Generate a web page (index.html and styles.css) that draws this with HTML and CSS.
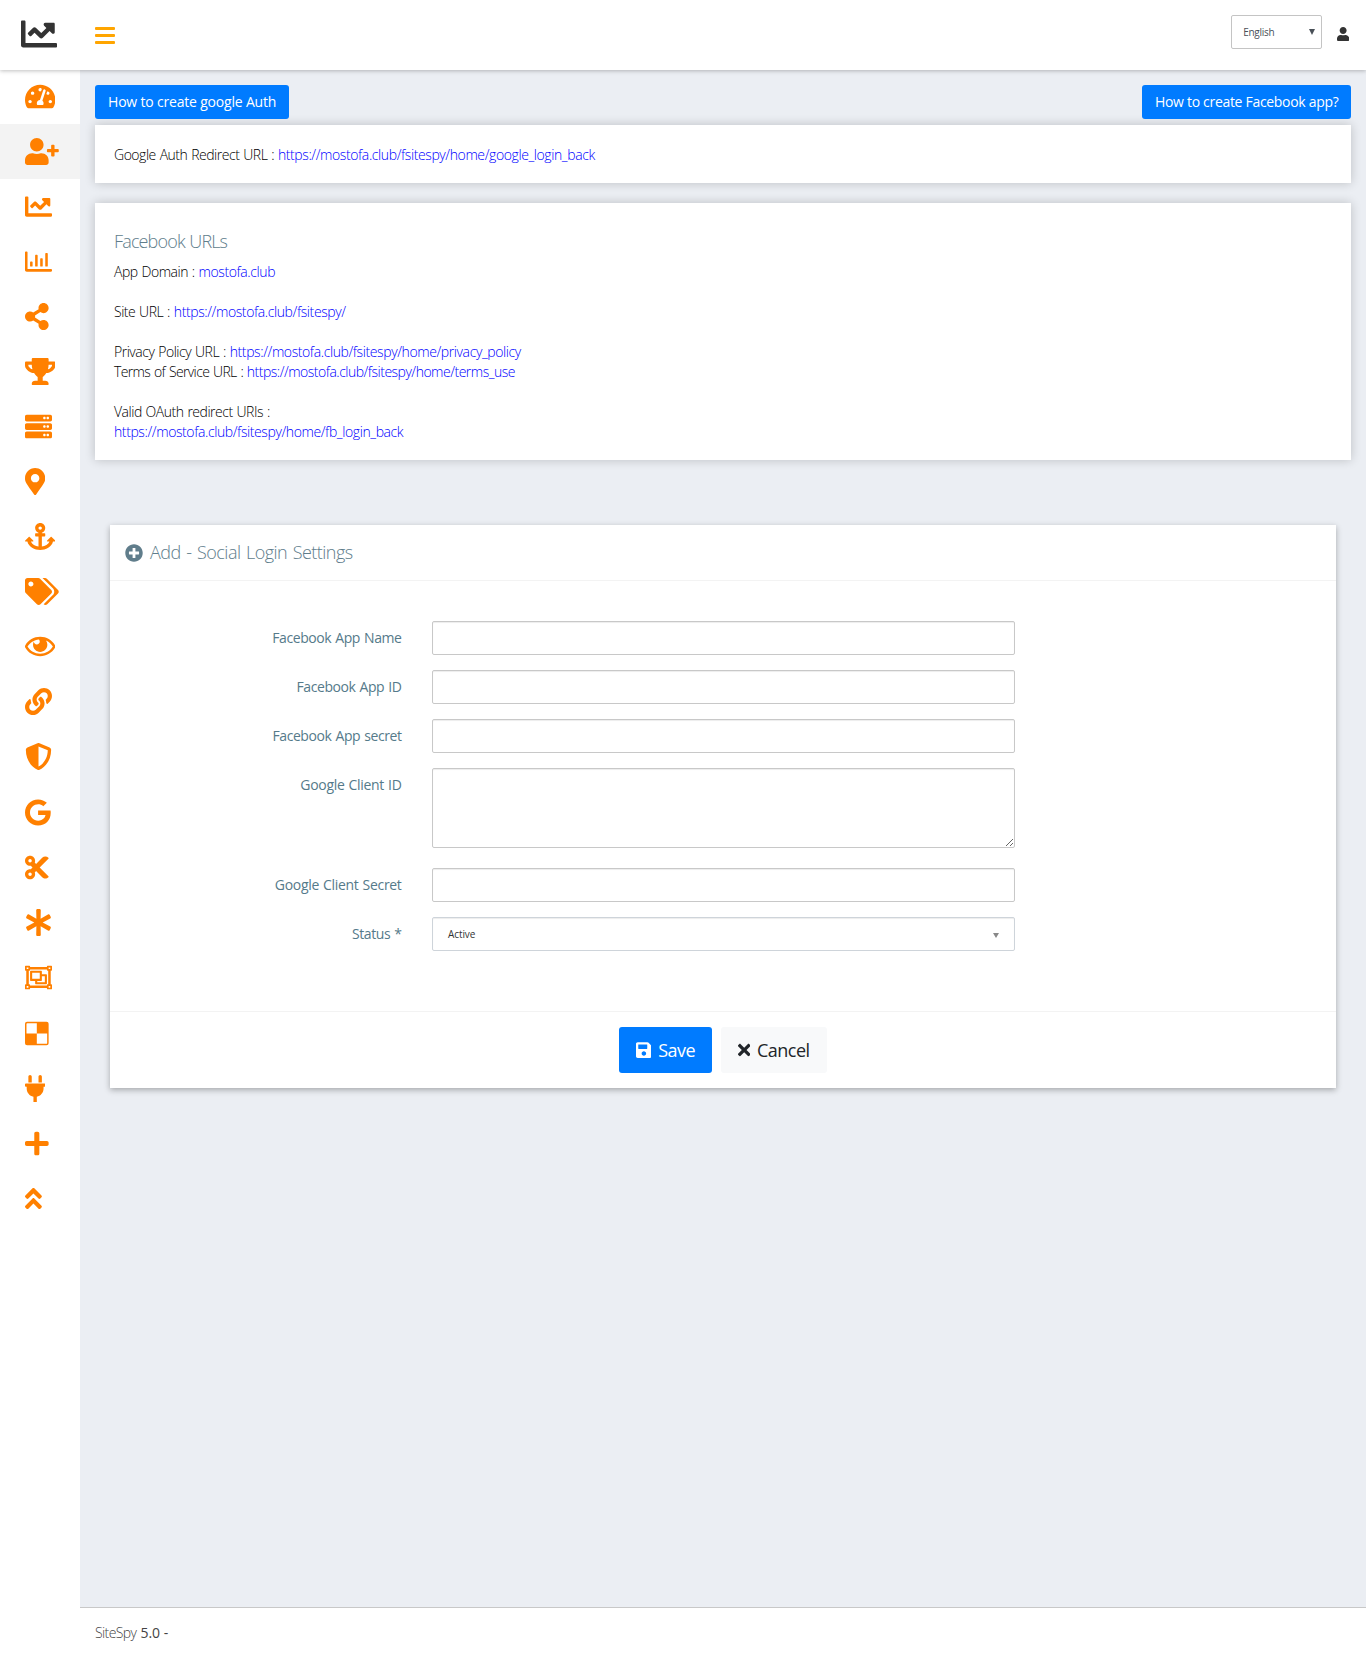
FILE: index.html
```html
<!DOCTYPE html>
<html lang="en">
<head>
<meta charset="utf-8">
<title>SiteSpy - Social Login Settings</title>
<link rel="stylesheet" href="styles.css">
</head>
<body>
<header class="topbar">
  <a class="brand"><svg viewBox="0 0 512 512"><path d="M496 384H64V80c0-8.84-7.16-16-16-16H16C7.16 64 0 71.16 0 80v336c0 17.67 14.33 32 32 32h464c8.84 0 16-7.16 16-16v-32c0-8.84-7.16-16-16-16zM464 96H345.94c-21.38 0-32.09 25.85-16.97 40.97l32.4 32.4L288 242.75l-73.37-73.37c-12.5-12.5-32.76-12.5-45.25 0l-68.69 68.69c-6.25 6.25-6.25 16.38 0 22.63l22.62 22.62c6.25 6.25 16.38 6.25 22.63 0L192 237.25l73.37 73.37c12.5 12.5 32.76 12.5 45.25 0l96-96 32.4 32.4c15.12 15.12 40.97 4.41 40.97-16.97V112c.01-8.84-7.15-16-15.99-16z"/></svg></a>
  <a class="toggle"><i></i><i></i><i></i></a>
  <div class="lang"><span>English</span><b class="caret"></b></div>
  <a class="user"><svg viewBox="0 0 448 512"><path d="M224 256c70.7 0 128-57.3 128-128S294.7 0 224 0 96 57.3 96 128s57.3 128 128 128zm89.6 32h-16.7c-22.2 10.2-46.9 16-72.9 16s-50.6-5.8-72.9-16h-16.7C60.2 288 0 348.2 0 422.4V464c0 26.5 21.5 48 48 48h352c26.5 0 48-21.5 48-48v-41.6c0-74.2-60.2-134.4-134.4-134.4z"/></svg></a>
</header>
<div class="shell">
<nav class="sidebar">
  <a><svg viewBox="0 0 576 512"><path d="M288 32C128.94 32 0 160.94 0 320c0 52.8 14.25 102.26 39.06 144.8 5.61 9.62 16.3 15.2 27.44 15.2h443c11.14 0 21.83-5.58 27.44-15.2C561.75 422.26 576 372.8 576 320c0-159.06-128.94-288-288-288zm0 64c14.71 0 26.58 10.13 30.32 23.65-1.11 2.26-2.64 4.23-3.45 6.67l-9.22 27.67c-5.13 3.49-10.97 6.01-17.64 6.01-17.67 0-32-14.33-32-32S270.33 96 288 96zM96 384c-17.67 0-32-14.33-32-32s14.33-32 32-32 32 14.33 32 32-14.33 32-32 32zm48-160c-17.67 0-32-14.33-32-32s14.33-32 32-32 32 14.33 32 32-14.33 32-32 32zm246.77-72.41l-61.33 184C343.13 347.33 352 364.54 352 384c0 11.72-3.38 22.55-8.88 32H232.88c-5.5-9.45-8.88-20.28-8.88-32 0-33.94 26.5-61.43 59.9-63.59l61.34-184.01c4.17-12.56 17.73-19.45 30.36-15.17 12.57 4.19 19.35 17.79 15.17 30.36zm14.66 57.2l15.52-46.55c3.47-1.29 7.13-2.23 11.05-2.23 17.67 0 32 14.33 32 32s-14.33 32-32 32c-11.38-.01-20.89-6.28-26.57-15.22zM480 384c-17.67 0-32-14.33-32-32s14.33-32 32-32 32 14.33 32 32-14.33 32-32 32z"/></svg></a>
  <a class="active"><svg viewBox="0 0 640 512"><path d="M624 208h-64v-64c0-8.8-7.2-16-16-16h-32c-8.8 0-16 7.2-16 16v64h-64c-8.8 0-16 7.2-16 16v32c0 8.8 7.2 16 16 16h64v64c0 8.8 7.2 16 16 16h32c8.8 0 16-7.2 16-16v-64h64c8.8 0 16-7.2 16-16v-32c0-8.8-7.2-16-16-16zm-400 48c70.7 0 128-57.3 128-128S294.7 0 224 0 96 57.3 96 128s57.3 128 128 128zm89.6 32h-16.7c-22.2 10.2-46.9 16-72.9 16s-50.6-5.8-72.9-16h-16.7C60.2 288 0 348.2 0 422.4V464c0 26.5 21.5 48 48 48h352c26.5 0 48-21.5 48-48v-41.6c0-74.2-60.2-134.4-134.4-134.4z"/></svg></a>
  <a><svg viewBox="0 0 512 512"><path d="M496 384H64V80c0-8.84-7.16-16-16-16H16C7.16 64 0 71.16 0 80v336c0 17.67 14.33 32 32 32h464c8.84 0 16-7.16 16-16v-32c0-8.84-7.16-16-16-16zM464 96H345.94c-21.38 0-32.09 25.85-16.97 40.97l32.4 32.4L288 242.75l-73.37-73.37c-12.5-12.5-32.76-12.5-45.25 0l-68.69 68.69c-6.25 6.25-6.25 16.38 0 22.63l22.62 22.62c6.25 6.25 16.38 6.25 22.63 0L192 237.25l73.37 73.37c12.5 12.5 32.76 12.5 45.25 0l96-96 32.4 32.4c15.12 15.12 40.97 4.41 40.97-16.97V112c.01-8.84-7.15-16-15.99-16z"/></svg></a>
  <a><svg viewBox="0 0 512 512"><path d="M396.8 352h22.4c6.4 0 12.8-6.4 12.8-12.8V108.8c0-6.4-6.4-12.8-12.8-12.8h-22.4c-6.4 0-12.8 6.4-12.8 12.8v230.4c0 6.4 6.4 12.8 12.8 12.8zm-192 0h22.4c6.4 0 12.8-6.4 12.8-12.8V140.8c0-6.4-6.4-12.8-12.8-12.8h-22.4c-6.4 0-12.8 6.4-12.8 12.8v198.4c0 6.4 6.4 12.8 12.8 12.8zm96 0h22.4c6.4 0 12.8-6.4 12.8-12.8V204.8c0-6.4-6.4-12.8-12.8-12.8h-22.4c-6.4 0-12.8 6.4-12.8 12.8v134.4c0 6.4 6.4 12.8 12.8 12.8zM496 400H48V80c0-8.84-7.16-16-16-16H16C7.16 64 0 71.16 0 80v336c0 17.67 14.33 32 32 32h464c8.84 0 16-7.16 16-16v-16c0-8.84-7.16-16-16-16zm-387.2-48h22.4c6.4 0 12.8-6.4 12.8-12.8v-70.4c0-6.4-6.4-12.8-12.8-12.8h-22.4c-6.4 0-12.8 6.4-12.8 12.8v70.4c0 6.4 6.4 12.8 12.8 12.8z"/></svg></a>
  <a><svg viewBox="0 0 448 512"><path d="M352 320c-22.608 0-43.387 7.819-59.79 20.895l-102.486-64.054a96.551 96.551 0 0 0 0-41.683l102.486-64.054C308.613 184.181 329.392 192 352 192c53.019 0 96-42.981 96-96S405.019 0 352 0s-96 42.981-96 96c0 7.158.79 14.13 2.276 20.841L155.79 180.895C139.387 167.819 118.608 160 96 160c-53.019 0-96 42.981-96 96s42.981 96 96 96c22.608 0 43.387-7.819 59.79-20.895l102.486 64.054A96.301 96.301 0 0 0 256 416c0 53.019 42.981 96 96 96s96-42.981 96-96-42.981-96-96-96z"/></svg></a>
  <a><svg viewBox="0 0 576 512"><path d="M552 64H448V24c0-13.3-10.7-24-24-24H152c-13.3 0-24 10.7-24 24v40H24C10.7 64 0 74.7 0 88v56c0 35.7 22.5 72.4 61.9 100.7 31.5 22.7 69.8 37.1 110 41.7C203.3 338.5 240 360 240 360v72h-48c-35.3 0-64 20.7-64 56v12c0 6.6 5.4 12 12 12h296c6.6 0 12-5.4 12-12v-12c0-35.3-28.7-56-64-56h-48v-72s36.7-21.5 68.1-73.6c40.3-4.6 78.6-19 110-41.7 39.3-28.3 61.9-65 61.9-100.7V88c0-13.3-10.7-24-24-24zM99.3 192.8C74.9 175.2 64 155.6 64 144v-16h64.2c1 32.6 5.8 61.2 12.8 86.2-15.1-5.2-29.2-12.4-41.7-21.4zM512 144c0 16.1-17.7 36.1-35.3 48.8-12.5 9-26.7 16.2-41.8 21.4 7-25 11.8-53.6 12.8-86.2H512v16z"/></svg></a>
  <a><svg viewBox="0 0 512 512"><path d="M480 160H32c-17.673 0-32-14.327-32-32V64c0-17.673 14.327-32 32-32h448c17.673 0 32 14.327 32 32v64c0 17.673-14.327 32-32 32zm-48-88c-13.255 0-24 10.745-24 24s10.745 24 24 24 24-10.745 24-24-10.745-24-24-24zm-64 0c-13.255 0-24 10.745-24 24s10.745 24 24 24 24-10.745 24-24-10.745-24-24-24zm112 248H32c-17.673 0-32-14.327-32-32v-64c0-17.673 14.327-32 32-32h448c17.673 0 32 14.327 32 32v64c0 17.673-14.327 32-32 32zm-48-88c-13.255 0-24 10.745-24 24s10.745 24 24 24 24-10.745 24-24-10.745-24-24-24zm-64 0c-13.255 0-24 10.745-24 24s10.745 24 24 24 24-10.745 24-24-10.745-24-24-24zm112 248H32c-17.673 0-32-14.327-32-32v-64c0-17.673 14.327-32 32-32h448c17.673 0 32 14.327 32 32v64c0 17.673-14.327 32-32 32zm-48-88c-13.255 0-24 10.745-24 24s10.745 24 24 24 24-10.745 24-24-10.745-24-24-24zm-64 0c-13.255 0-24 10.745-24 24s10.745 24 24 24 24-10.745 24-24-10.745-24-24-24z"/></svg></a>
  <a><svg viewBox="0 0 384 512"><path d="M172.268 501.67C26.97 291.031 0 269.413 0 192 0 85.961 85.961 0 192 0s192 85.961 192 192c0 77.413-26.97 99.031-172.268 309.67-9.535 13.774-29.93 13.773-39.464 0zM192 272c44.183 0 80-35.817 80-80s-35.817-80-80-80-80 35.817-80 80 35.817 80 80 80z"/></svg></a>
  <a><svg viewBox="0 0 576 512"><path d="M12.971 352h32.394C67.172 454.735 181.944 512 288 512c106.229 0 220.853-57.38 242.635-160h32.394c10.691 0 16.045-12.926 8.485-20.485l-67.029-67.029c-4.686-4.686-12.284-4.686-16.971 0l-67.029 67.029c-7.56 7.56-2.206 20.485 8.485 20.485h35.146c-20.29 54.317-84.963 86.588-144.117 94.015V256h52c6.627 0 12-5.373 12-12v-40c0-6.627-5.373-12-12-12h-52v-5.47c37.281-13.226 63.995-48.804 63.943-90.544C383.874 43.026 341.375.088 288.479.001 235.226-.086 192 43.056 192 96c0 41.794 26.716 77.357 64 90.53V192h-52c-6.627 0-12 5.373-12 12v40c0 6.627 5.373 12 12 12h52v190.015c-58.936-7.399-123.82-39.679-144.117-94.015h35.146c10.691 0 16.045-12.926 8.485-20.485l-67.029-67.029c-4.686-4.686-12.284-4.686-16.971 0L4.485 331.515C-3.074 339.074 2.28 352 12.971 352zM288 64c17.645 0 32 14.355 32 32s-14.355 32-32 32-32-14.355-32-32 14.355-32 32-32z"/></svg></a>
  <a><svg viewBox="0 0 640 512"><path d="M497.941 225.941L286.059 14.059A48 48 0 0 0 252.118 0H48C21.49 0 0 21.49 0 48v204.118a48 48 0 0 0 14.059 33.941l211.882 211.882c18.744 18.745 49.136 18.746 67.882 0l204.118-204.118c18.745-18.745 18.745-49.137 0-67.882zM112 160c-26.51 0-48-21.49-48-48s21.49-48 48-48 48 21.49 48 48-21.49 48-48 48zm513.941 133.823L421.823 497.941c-18.745 18.745-49.137 18.745-67.882 0l-.36-.36L527.64 323.522c16.999-16.999 26.36-39.6 26.36-63.64s-9.362-46.641-26.36-63.64L331.397 0h48.721a48 48 0 0 1 33.941 14.059l211.882 211.882c18.745 18.745 18.745 49.137 0 67.882z"/></svg></a>
  <a><svg viewBox="0 0 576 512"><path d="M569.354 231.631C512.969 135.949 407.81 72 288 72 168.14 72 63.004 135.994 6.646 231.631a47.999 47.999 0 0 0 0 48.739C63.031 376.051 168.19 440 288 440c119.86 0 224.996-63.994 281.354-159.631a47.997 47.997 0 0 0 0-48.738zM288 392c-102.556 0-192.091-54.701-240-136 44.157-74.933 123.677-127.27 216.162-135.007C273.958 131.078 280 144.83 280 160c0 30.928-25.072 56-56 56s-56-25.072-56-56l.001-.042C157.794 179.043 152 200.844 152 224c0 75.111 60.889 136 136 136s136-60.889 136-136c0-31.031-10.4-59.629-27.895-82.515C451.704 164.638 498.009 205.106 528 256c-47.908 81.299-137.444 136-240 136z"/></svg></a>
  <a><svg viewBox="0 0 512 512"><path d="M326.612 185.391c59.747 59.809 58.927 155.698.36 214.59-.11.12-.24.25-.36.37l-67.2 67.2c-59.27 59.27-155.699 59.262-214.96 0-59.27-59.26-59.27-155.7 0-214.96l37.106-37.106c9.84-9.84 26.786-3.3 27.294 10.606.648 17.722 3.826 35.527 9.69 52.721 1.986 5.822.567 12.262-3.783 16.612l-13.087 13.087c-28.026 28.026-28.905 73.66-1.155 101.96 28.024 28.579 74.086 28.749 102.325.51l67.2-67.19c28.191-28.191 28.073-73.757 0-101.83-3.701-3.694-7.429-6.564-10.341-8.569a16.037 16.037 0 0 1-6.947-12.606c-.396-10.567 3.348-21.456 11.698-29.806l21.054-21.055c5.521-5.521 14.182-6.199 20.584-1.731a152.482 152.482 0 0 1 20.522 17.197zM467.547 44.449c-59.261-59.262-155.69-59.27-214.96 0l-67.2 67.2c-.12.12-.25.25-.36.37-58.566 58.892-59.387 154.781.36 214.59a152.454 152.454 0 0 0 20.521 17.196c6.402 4.468 15.064 3.789 20.584-1.731l21.054-21.055c8.35-8.35 12.094-19.239 11.698-29.806a16.037 16.037 0 0 0-6.947-12.606c-2.912-2.005-6.64-4.875-10.341-8.569-28.073-28.073-28.191-73.639 0-101.83l67.2-67.19c28.239-28.239 74.3-28.069 102.325.51 27.75 28.3 26.872 73.934-1.155 101.96l-13.087 13.087c-4.35 4.35-5.769 10.79-3.783 16.612 5.864 17.194 9.042 34.999 9.69 52.721.509 13.906 17.454 20.446 27.294 10.606l37.106-37.106c59.271-59.259 59.271-155.699.001-214.959z"/></svg></a>
  <a><svg viewBox="0 0 512 512"><path d="M496 128c0 221.282-135.934 344.645-221.539 380.308a48 48 0 0 1-36.923 0C130.495 463.713 16 326.487 16 128a48 48 0 0 1 29.539-44.308l192-80a48 48 0 0 1 36.923 0l192 80A48 48 0 0 1 496 128zM256 446.313l.066.034c93.735-46.689 172.497-156.308 175.817-307.729L256 65.333v380.98z"/></svg></a>
  <a class="logo-icon"><svg viewBox="0 0 488 512"><path d="M488 261.8C488 403.3 391.1 504 248 504 110.8 504 0 393.2 0 256S110.8 8 248 8c66.8 0 123 24.5 166.3 64.9l-67.5 64.9C258.5 52.6 94.3 116.6 94.3 256c0 86.5 69.1 156.6 153.7 156.6 98.2 0 135-70.4 140.8-106.9H248v-85.3h236.1c2.3 12.7 3.9 24.9 3.9 41.4z"/></svg></a>
  <a><svg viewBox="0 0 448 512"><path d="M278.06 256L444.48 89.57c4.69-4.69 4.69-12.29 0-16.97-32.8-32.8-85.99-32.8-118.79 0L210.18 188.12l-24.86-24.86c4.31-10.92 6.68-22.81 6.68-35.26 0-53.02-42.98-96-96-96S0 74.98 0 128s42.98 96 96 96c4.54 0 8.99-.32 13.36-.93L142.29 256l-32.93 32.93c-4.37-.61-8.83-.93-13.36-.93-53.02 0-96 42.98-96 96s42.98 96 96 96 96-42.98 96-96c0-12.45-2.37-24.34-6.68-35.26l24.86-24.86L325.69 439.4c32.8 32.8 85.99 32.8 118.79 0 4.69-4.68 4.69-12.28 0-16.97L278.06 256zM96 160c-17.64 0-32-14.36-32-32s14.36-32 32-32 32 14.36 32 32-14.36 32-32 32zm0 256c-17.64 0-32-14.36-32-32s14.36-32 32-32 32 14.36 32 32-14.36 32-32 32z"/></svg></a>
  <a><svg viewBox="0 0 512 512"><path d="M478.21 334.093L336 256l142.21-78.093c11.795-6.477 15.961-21.384 9.232-33.037l-19.48-33.741c-6.728-11.653-21.72-15.499-33.227-8.523L296 186.718l3.475-162.204C299.763 11.061 288.937 0 275.48 0h-38.96c-13.456 0-24.283 11.061-23.994 24.514L216 186.718 77.265 102.607c-11.506-6.976-26.499-3.13-33.227 8.523l-19.48 33.741c-6.728 11.653-2.562 26.56 9.233 33.037L176 256 33.79 334.093c-11.795 6.477-15.961 21.384-9.232 33.037l19.48 33.741c6.728 11.653 21.721 15.499 33.227 8.523L216 325.282l-3.475 162.204C212.237 500.939 223.064 512 236.52 512h38.961c13.456 0 24.283-11.061 23.995-24.514L296 325.282l138.735 84.111c11.506 6.976 26.499 3.13 33.227-8.523l19.48-33.741c6.728-11.653 2.563-26.559-9.232-33.036z"/></svg></a>
  <a><svg viewBox="0 0 512 512"><path d="M500 128c6.627 0 12-5.373 12-12V44c0-6.627-5.373-12-12-12h-72c-6.627 0-12 5.373-12 12v12H96V44c0-6.627-5.373-12-12-12H12C5.373 32 0 37.373 0 44v72c0 6.627 5.373 12 12 12h12v256H12c-6.627 0-12 5.373-12 12v72c0 6.627 5.373 12 12 12h72c6.627 0 12-5.373 12-12v-12h320v12c0 6.627 5.373 12 12 12h72c6.627 0 12-5.373 12-12v-72c0-6.627-5.373-12-12-12h-12V128h12zm-52-64h32v32h-32V64zM32 64h32v32H32V64zm32 384H32v-32h32v32zm416 0h-32v-32h32v32zm-40-64h-12c-6.627 0-12 5.373-12 12v12H96v-12c0-6.627-5.373-12-12-12H72V128h12c6.627 0 12-5.373 12-12v-12h320v12c0 6.627 5.373 12 12 12h12v256zm-36-192h-84v-52c0-6.628-5.373-12-12-12H108c-6.627 0-12 5.372-12 12v168c0 6.628 5.373 12 12 12h84v52c0 6.628 5.373 12 12 12h200c6.627 0 12-5.372 12-12V204c0-6.628-5.373-12-12-12zm-268-24h144v112H136V168zm240 176H232v-24h76c6.627 0 12-5.372 12-12v-76h56v112z"/></svg></a>
  <a class="logo-icon"><svg viewBox="0 0 448 512"><path fill-rule="evenodd" d="M40 32h368a40 40 0 0 1 40 40v368a40 40 0 0 1-40 40H40a40 40 0 0 1-40-40V72a40 40 0 0 1 40-40zM44 60a16 16 0 0 0-16 16v180h196V60zM224 256v196h180a16 16 0 0 0 16-16V256z"/></svg></a>
  <a><svg viewBox="0 0 384 512"><path d="M256 144V32c0-17.673 14.327-32 32-32s32 14.327 32 32v112h-64zm112 16H16c-8.837 0-16 7.163-16 16v32c0 8.837 7.163 16 16 16h16v32c0 77.406 54.969 141.971 128 156.796V512h64v-99.204c73.031-14.825 128-79.39 128-156.796v-32h16c8.837 0 16-7.163 16-16v-32c0-8.837-7.163-16-16-16zm-240-16V32c0-17.673-14.327-32-32-32S64 14.327 64 32v112h64z"/></svg></a>
  <a><svg viewBox="0 0 448 512"><path d="M416 208H272V64c0-17.67-14.33-32-32-32h-32c-17.67 0-32 14.33-32 32v144H32c-17.67 0-32 14.33-32 32v32c0 17.67 14.33 32 32 32h144v144c0 17.67 14.33 32 32 32h32c17.67 0 32-14.33 32-32V304h144c17.67 0 32-14.33 32-32v-32c0-17.67-14.33-32-32-32z"/></svg></a>
  <a><svg viewBox="0 0 320 512"><path d="M177 255.7l136 136c9.4 9.4 9.4 24.6 0 33.9l-22.6 22.6c-9.4 9.4-24.6 9.4-33.9 0L160 351.9l-96.4 96.4c-9.4 9.4-24.6 9.4-33.9 0L7 425.7c-9.4-9.4-9.4-24.6 0-33.9l136-136c9.4-9.5 24.6-9.5 34-.1zm-34-192L7 199.7c-9.4 9.4-9.4 24.6 0 33.9l22.6 22.6c9.4 9.4 24.6 9.4 33.9 0l96.4-96.4 96.4 96.4c9.4 9.4 24.6 9.4 33.9 0l22.6-22.6c9.4-9.4 9.4-24.6 0-33.9l-136-136c-9.2-9.4-24.4-9.4-33.8 0z"/></svg></a>
</nav>
<div class="page">
<main class="content">
  <div class="help-row">
    <a class="help help-google">How to create google Auth</a>
    <a class="help help-fb">How to create Facebook app?</a>
  </div>
  <section class="info info-google">
    <p>Google Auth Redirect URL : <a>https://mostofa.club/fsitespy/home/google_login_back</a></p>
  </section>
  <section class="info info-fb">
    <h4>Facebook URLs</h4>
    <p>App Domain : <a>mostofa.club</a></p>
    <p class="gap">Site URL : <a>https://mostofa.club/fsitespy/</a></p>
    <p class="gap">Privacy Policy URL : <a>https://mostofa.club/fsitespy/home/privacy_policy</a></p>
    <p class="terms">Terms of Service URL : <a>https://mostofa.club/fsitespy/home/terms_use</a></p>
    <p class="gap">Valid OAuth redirect URIs :</p>
    <p><a>https://mostofa.club/fsitespy/home/fb_login_back</a></p>
  </section>
  <form class="settings">
    <div class="settings-head">
      <svg viewBox="0 0 512 512"><path d="M256 8C119 8 8 119 8 256s111 248 248 248 248-111 248-248S393 8 256 8zm144 276c0 6.6-5.4 12-12 12h-92v92c0 6.6-5.4 12-12 12h-56c-6.6 0-12-5.4-12-12v-92h-92c-6.6 0-12-5.4-12-12v-56c0-6.6 5.4-12 12-12h92v-92c0-6.6 5.4-12 12-12h56c6.6 0 12 5.4 12 12v92h92c6.6 0 12 5.4 12 12v56z"/></svg>
      <span>Add - Social Login Settings</span>
    </div>
    <div class="fields">
      <label>Facebook App Name</label><input type="text">
      <label>Facebook App ID</label><input type="text">
      <label>Facebook App secret</label><input type="text">
      <label class="wide">Google Client ID</label><textarea></textarea>
      <label class="wide">Google Client Secret</label><input type="text">
      <label>Status *</label><div class="select"><span>Active</span><b class="caret"></b></div>
    </div>
    <div class="settings-foot">
      <a class="btn save"><svg viewBox="0 0 448 512"><path d="M433.941 129.941l-83.882-83.882A48 48 0 0 0 316.118 32H48C21.49 32 0 53.49 0 80v352c0 26.51 21.49 48 48 48h352c26.51 0 48-21.49 48-48V163.882a48 48 0 0 0-14.059-33.941zM224 416c-35.346 0-64-28.654-64-64 0-35.346 28.654-64 64-64s64 28.654 64 64c0 35.346-28.654 64-64 64zm96-304.52V212c0 6.627-5.373 12-12 12H76c-6.627 0-12-5.373-12-12V108c0-6.627 5.373-12 12-12h228.52c3.183 0 6.235 1.264 8.485 3.515l3.48 3.48A11.996 11.996 0 0 1 320 111.48z"/></svg><span>Save</span></a>
      <a class="btn cancel"><svg viewBox="0 0 352 512"><path d="M242.72 256l100.07-100.07c12.28-12.28 12.28-32.19 0-44.48l-22.24-22.24c-12.28-12.28-32.19-12.28-44.48 0L176 189.28 75.93 89.21c-12.28-12.28-32.19-12.28-44.48 0L9.21 111.45c-12.28 12.28-12.28 32.19 0 44.48L109.28 256 9.21 356.07c-12.28 12.28-12.28 32.19 0 44.48l22.24 22.24c12.28 12.28 32.2 12.28 44.48 0L176 322.72l100.07 100.07c12.28 12.28 32.2 12.28 44.48 0l22.24-22.24c12.28-12.28 12.28-32.19 0-44.48L242.72 256z"/></svg><span>Cancel</span></a>
    </div>
  </form>
</main>
<footer class="footer"><span class="name">SiteSpy</span><span>5.0 -</span></footer>
</div>
</div>
</body>
</html>
```
FILE: styles.css
```css
* { box-sizing: border-box; }
body {
  margin: 0;
  min-height: 1658px;
  display: flex;
  flex-direction: column;
  background: #fff;
  font: 300 14px/20px "Open Sans", "Noto Sans", sans-serif;
  color: #000;
}
p, h4 { margin: 0; }
svg { display: block; fill: currentColor; }

.topbar {
  position: relative;
  z-index: 2;
  height: 70px;
  display: flex;
  background: #fff;
  color: #333;
  box-shadow: 0 1px 4px rgba(0, 0, 0, .25);
}
.brand { width: 95px; padding: 15.5px 0 0 21px; }
.brand svg { height: 36px; }
.toggle { width: 20px; padding-top: 27px; display: flex; flex-direction: column; gap: 4px; }
.toggle i { height: 3px; border-radius: 1px; background: #ffa500; }
.lang {
  width: 91px;
  height: 34px;
  margin: 15px 15px 0 auto;
  padding: 0 6px 0 11.5px;
  display: flex;
  align-items: center;
  justify-content: space-between;
  border: 1px solid #c4c4c4;
  border-radius: 2px;
  font-size: 10px;
  font-weight: 400;
  letter-spacing: -.3px;
  color: #495057;
}
.caret {
  width: 0;
  height: 0;
  border: 3px solid transparent;
  border-top: 6px solid #495057;
  border-bottom: 0;
}
.user { padding: 27px 17px 0 0; }
.user svg { height: 14px; }

.shell { flex: 1; display: flex; }
.sidebar { width: 80px; margin-top: -1px; color: #ff8000; }
.sidebar a { height: 55px; padding-left: 25px; display: flex; align-items: center; }
.sidebar a.logo-icon { height: 56px; padding-top: 1px; }
.sidebar .active { background: #f3f3f3; }
.sidebar svg { height: 27px; }

.page { flex: 1; display: flex; flex-direction: column; }
.content { flex: 1; padding: 15px; background: #ebeef3; }
.help-row { display: flex; justify-content: space-between; margin-bottom: 6px; }
.help {
  height: 34px;
  padding: 0 13px;
  line-height: 34px;
  border-radius: 3px;
  background: #007bff;
  color: #fff;
  font-weight: 500;
  letter-spacing: -.19px;
  white-space: nowrap;
}
.help-google { width: 194px; }
.help-fb { width: 209px; letter-spacing: -.31px; }
.info {
  padding: 20px 19px 0;
  background: #fff;
  letter-spacing: -.48px;
  word-spacing: .7px;
  box-shadow: 0 0 10px rgba(0, 0, 0, .2);
}
.info a { color: #00f; letter-spacing: -.4px; }
.info .terms { letter-spacing: -.62px; }
.info .terms a { letter-spacing: -.5px; }
.info-google { height: 58px; margin-bottom: 20px; }
.info-fb { height: 257px; padding-top: 28px; }
.info-fb h4 {
  margin-bottom: 11px;
  font-size: 18px;
  font-weight: 300;
  letter-spacing: -.85px;
  color: #607d8b;
}
.info-fb .gap { margin-top: 20px; }

.settings {
  margin: 65px 15px 0;
  background: #fff;
  box-shadow: 0 2px 6px rgba(0, 0, 0, .3);
}
.settings-head {
  height: 56px;
  padding: 0 15px;
  display: flex;
  align-items: center;
  gap: 7px;
  border-bottom: 1px solid #f3f3f3;
  font-size: 18px;
  letter-spacing: -.53px;
  word-spacing: 1.4px;
  color: #607d8b;
}
.settings-head svg { height: 18px; }
.settings-head span { margin-bottom: 2px; }
.fields {
  height: 430px;
  padding: 40px 0 0;
  display: grid;
  grid-template-columns: 291.5px 583px;
  grid-template-rows: 34px 34px 34px 85px 34px 34px;
  column-gap: 30.5px;
  row-gap: 15px;
}
.fields label {
  padding-top: 7px;
  text-align: right;
  font-weight: 400;
  letter-spacing: -.42px;
  word-spacing: .8px;
  color: #557a8a;
}
.fields .wide { letter-spacing: -.32px; }
.fields input, .fields textarea, .fields .select {
  width: 583px;
  height: 34px;
  margin: 0;
  border: 1px solid #c8c8c8;
  border-radius: 2px;
  background: #fff;
  box-shadow: inset 0 1px 1px rgba(0, 0, 0, .075);
}
.fields textarea { height: 80px; resize: vertical; }
.fields .select {
  padding: 0 15px;
  display: flex;
  align-items: center;
  justify-content: space-between;
  border-color: #ced4da;
  font-size: 10px;
  font-weight: 400;
  letter-spacing: -.1px;
  color: #333;
}
.select .caret { border-top-width: 5px; border-top-color: #888; margin-top: 3px; }
.settings-foot {
  height: 77px;
  padding: 15px 1px 0 0;
  display: flex;
  justify-content: center;
  gap: 9px;
  border-top: 1px solid #f3f3f3;
}
.btn {
  height: 46px;
  padding-left: 17px;
  display: flex;
  align-items: center;
  gap: 7px;
  border-radius: 3px;
  font-size: 18px;
  font-weight: 400;
  letter-spacing: -.5px;
}
.btn svg { height: 18px; }
.save { width: 93px; background: #007bff; color: #fff; }
.cancel { width: 106px; background: #f8f9fa; color: #212529; }
.footer {
  height: 51px;
  padding: 15px;
  display: flex;
  gap: 4px;
  border-top: 1px solid #c8c8c8;
  font-weight: 400;
  color: #444;
}
.footer .name { font-weight: 300; letter-spacing: -.6px; }
```
